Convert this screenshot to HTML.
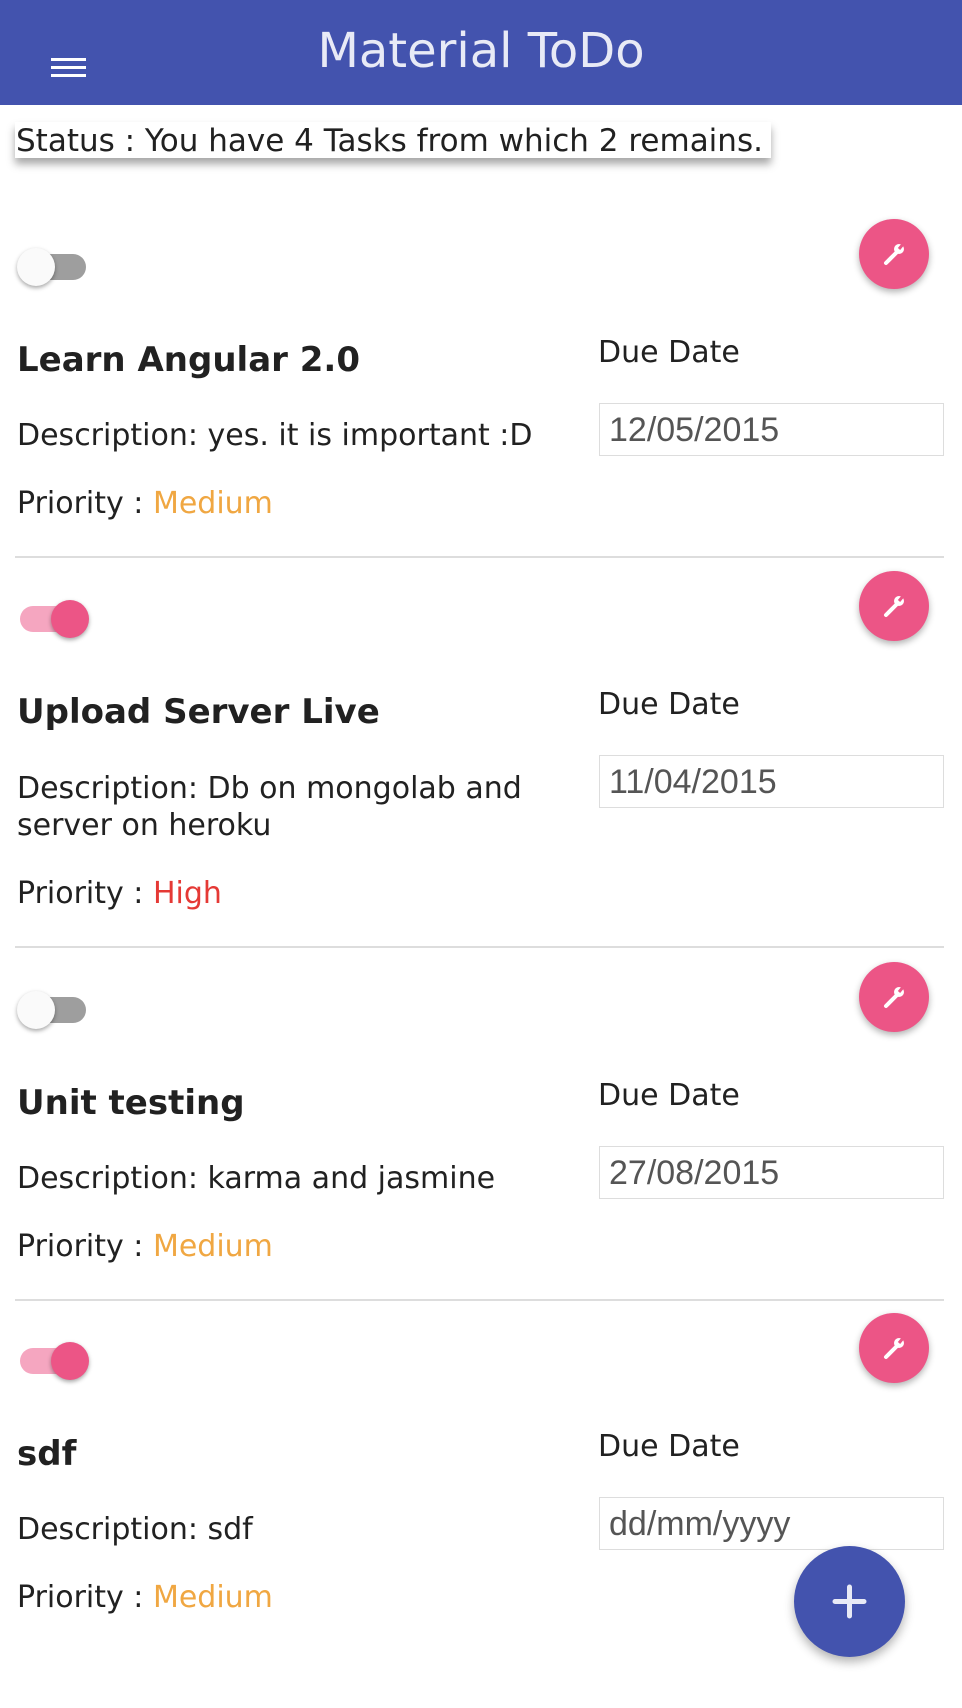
<!DOCTYPE html>
<html><head><meta charset="utf-8"><style>
*{margin:0;padding:0;box-sizing:border-box}
body{width:962px;height:1708px;background:#fff;font-family:"DejaVu Sans","Liberation Sans",sans-serif;color:#212121;position:relative;overflow:hidden}
.hdr{position:absolute;left:0;top:0;width:962px;height:105px;background:#4353ae}
.hdr h1{position:absolute;left:0;width:962px;top:23px;text-align:center;font-weight:normal;font-size:48px;color:#e8eaf6}
.hb{position:absolute;left:51px;width:35px;height:3px;background:#fff}
.status{position:absolute;left:15px;top:122px;width:756px;height:36px;background:#fff;box-shadow:0 6px 8px rgba(0,0,0,.35);font-size:31px;line-height:38px;padding-left:1px;white-space:nowrap;overflow:hidden}
.a{position:absolute;white-space:nowrap}
.tr{position:absolute;left:20px;width:66px;height:26px;border-radius:13px}
.kn{position:absolute;width:38px;height:38px;border-radius:50%;box-shadow:0 2px 4px rgba(0,0,0,.35)}
.fab{position:absolute;left:859px;width:70px;height:70px;border-radius:50%;background:#ec5586;box-shadow:0 3px 7px rgba(0,0,0,.3)}
.t{font-size:34px;font-weight:bold;left:17px}
.f{font-size:30px;left:17px}
.dd{font-size:30px;left:598px}
.inp{position:absolute;left:599px;width:345px;height:53px;border:1px solid #ddd;font-family:"Liberation Sans",sans-serif;font-size:34px;color:#555;line-height:53px;padding-left:9px}
.hr{position:absolute;left:15px;width:929px;height:2px;background:#ddd}
.m{color:#f0a742}.h{color:#e53935}
</style></head><body>
<div class="hdr"><div class="hb" style="top:58px"></div><div class="hb" style="top:66px"></div><div class="hb" style="top:74px"></div><h1>Material ToDo</h1></div>
<div class="status">Status : You have 4 Tasks from which 2 remains.</div>

<!-- card 1 -->
<div class="tr" style="top:254px;background:#9e9e9e"></div><div class="kn" style="left:17px;top:248px;background:#fafafa"></div>
<div class="fab" style="top:219px"><svg width="70" height="70" viewBox="0 0 70 70"><path d="M27 44 L38 33" stroke="#fff" stroke-width="4" stroke-linecap="round"/><circle cx="40" cy="30" r="5" fill="#fff"/><path d="M40 30 L45 24" stroke="#ec5586" stroke-width="3"/></svg></div>
<div class="a t" style="top:340px">Learn Angular 2.0</div>
<div class="a dd" style="top:335px">Due Date</div>
<div class="inp" style="top:403px">12/05/2015</div>
<div class="a f" style="top:418px">Description: yes. it is important :D</div>
<div class="a f" style="top:486px">Priority : <span class="m">Medium</span></div>
<div class="hr" style="top:556px"></div>

<!-- card 2 -->
<div class="tr" style="top:606px;background:#f5a6c0"></div><div class="kn" style="left:51px;top:600px;background:#ec5586"></div>
<div class="fab" style="top:571px"><svg width="70" height="70" viewBox="0 0 70 70"><path d="M27 44 L38 33" stroke="#fff" stroke-width="4" stroke-linecap="round"/><circle cx="40" cy="30" r="5" fill="#fff"/><path d="M40 30 L45 24" stroke="#ec5586" stroke-width="3"/></svg></div>
<div class="a t" style="top:692px">Upload Server Live</div>
<div class="a dd" style="top:687px">Due Date</div>
<div class="inp" style="top:755px">11/04/2015</div>
<div class="a f" style="top:771px">Description: Db on mongolab and</div>
<div class="a f" style="top:808px">server on heroku</div>
<div class="a f" style="top:876px">Priority : <span class="h">High</span></div>
<div class="hr" style="top:946px"></div>

<!-- card 3 -->
<div class="tr" style="top:997px;background:#9e9e9e"></div><div class="kn" style="left:17px;top:991px;background:#fafafa"></div>
<div class="fab" style="top:962px"><svg width="70" height="70" viewBox="0 0 70 70"><path d="M27 44 L38 33" stroke="#fff" stroke-width="4" stroke-linecap="round"/><circle cx="40" cy="30" r="5" fill="#fff"/><path d="M40 30 L45 24" stroke="#ec5586" stroke-width="3"/></svg></div>
<div class="a t" style="top:1083px">Unit testing</div>
<div class="a dd" style="top:1078px">Due Date</div>
<div class="inp" style="top:1146px">27/08/2015</div>
<div class="a f" style="top:1161px">Description: karma and jasmine</div>
<div class="a f" style="top:1229px">Priority : <span class="m">Medium</span></div>
<div class="hr" style="top:1299px"></div>

<!-- card 4 -->
<div class="tr" style="top:1348px;background:#f5a6c0"></div><div class="kn" style="left:51px;top:1342px;background:#ec5586"></div>
<div class="fab" style="top:1313px"><svg width="70" height="70" viewBox="0 0 70 70"><path d="M27 44 L38 33" stroke="#fff" stroke-width="4" stroke-linecap="round"/><circle cx="40" cy="30" r="5" fill="#fff"/><path d="M40 30 L45 24" stroke="#ec5586" stroke-width="3"/></svg></div>
<div class="a t" style="top:1434px">sdf</div>
<div class="a dd" style="top:1429px">Due Date</div>
<div class="inp" style="top:1497px">dd/mm/yyyy</div>
<div class="a f" style="top:1512px">Description: sdf</div>
<div class="a f" style="top:1580px">Priority : <span class="m">Medium</span></div>

<div style="position:absolute;left:794px;top:1546px;width:111px;height:111px;border-radius:50%;background:#4353ae;box-shadow:0 5px 10px rgba(0,0,0,.3)"><svg width="111" height="111" viewBox="0 0 111 111"><path d="M55.5 41 V70 M41 55.5 H70" stroke="#e8eaf6" stroke-width="5" stroke-linecap="round"/></svg></div>
</body></html>
